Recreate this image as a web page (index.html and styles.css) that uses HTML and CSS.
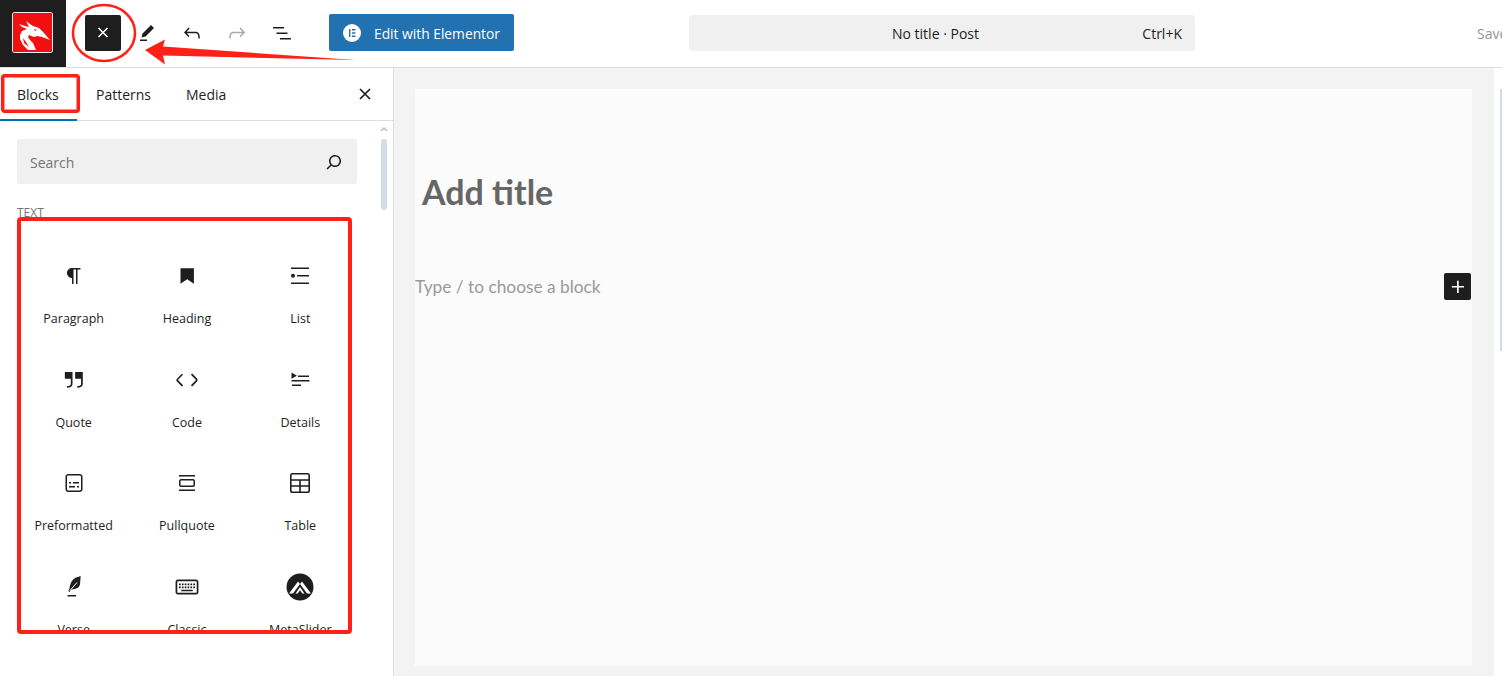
FILE: index.html
```html
<!DOCTYPE html>
<html lang="en">
<head>
<meta charset="utf-8">
<title>Add New Post</title>
<link rel="stylesheet" href="styles.css">
</head>
<body>
<div class="app">
  <header class="topbar">
    <div class="logo-cell">
      <div class="logo">
        <svg viewBox="0 0 39 39" width="39" height="39"><rect width="39" height="39" rx="2" fill="#f01010"/><path fill="#fff" d="M13 8l4 3 3 2 6 2 3 3 2 2 6 7-8-3-5-1-3 1-5-2-1 2 2 3 3 3 3 7h-8l-5-5-3-6v-4l2-4 5-2-5-2-3-3 6 2 4 1z"/><path fill="#f01010" d="M21 16l3 1-2 1zM10 25l3 4 3 5-5-4z"/></svg>
      </div>
    </div>
    <div class="tools">
      <button class="tool tool-active"><svg viewBox="0 0 24 24" width="24" height="24"><path stroke="#fff" stroke-width="1.500" d="M7.500 7l9 9M16.500 7l-9 9"/></svg></button>
      <button class="tool"><svg viewBox="0 0 24 24" width="24" height="24"><path fill="#1e1e1e" d="m19 7-3-3-8.500 8.500-1 4 4-1L19 7Zm-7 11.500H5V20h7v-1.500Z"/></svg></button>
      <button class="tool"><svg viewBox="0 0 24 24" width="24" height="24"><path fill="#1e1e1e" d="M18.300 11.700c-.6-.6-1.400-.9-2.300-.9H6.700l2.900-3.300-1.100-1-4.500 5L8.500 16l1-1-2.700-2.700H16c.5 0 .9.2 1.300.5 1 1 1 3.400 1 4.500v.3h1.500v-.2c0-1.500 0-4.300-1.500-5.700z"/></svg></button>
      <button class="tool"><svg viewBox="0 0 24 24" width="24" height="24"><path fill="#aaa" d="M15.600 6.500l-1.100 1 2.900 3.300H8c-.9 0-1.700.3-2.300.9-1.400 1.500-1.400 4.200-1.400 5.600v.2h1.500v-.3c0-1.100 0-3.500 1-4.500.3-.3.7-.5 1.300-.5h9.200L14.500 15l1.100 1.100 4.600-4.600-4.600-5z"/></svg></button>
      <button class="tool"><svg viewBox="0 0 24 24" width="24" height="24"><path fill="#1e1e1e" d="M3 6h11v1.500H3V6Zm3.500 5.500h11V13h-11v-1.500ZM21 17H10v1.500h11V17Z"/></svg></button>
    </div>
    <a class="elementor">
      <span class="el-badge"><svg viewBox="0 0 18 18" width="18" height="18"><circle cx="9" cy="9" r="9" fill="#fff"/><path fill="#2271b1" d="M6 5h1.400v8H6zM9 5h3.400v1.400H9zM9 8.300h3.400v1.400H9zM9 11.600h3.400V13H9z"/></svg></span>
      <span class="el-label">Edit with Elementor</span>
    </a>
    <div class="command">
      <span class="command-title">No title · Post</span>
      <span class="command-key">Ctrl+K</span>
    </div>
    <div class="save">Save</div>
  </header>

  <div class="workspace">
    <aside class="sidebar">
      <nav class="tabs">
        <span class="tab tab-on">Blocks</span>
        <span class="tab tab-patterns">Patterns</span>
        <span class="tab tab-media">Media</span>
        <span class="tabs-close"><svg viewBox="0 0 24 24" width="24" height="24"><path stroke="#1e1e1e" stroke-width="1.700" d="M7 7l10 10M17 7L7 17"/></svg></span>
      </nav>
      <div class="panel">
        <div class="panel-scroll">
          <div class="search">
            <span class="search-text">Search</span>
            <svg viewBox="0 0 24 24" width="24" height="24"><path fill="#1e1e1e" d="M13 5c-3.300 0-6 2.700-6 6 0 1.400.5 2.700 1.300 3.700l-3.800 3.800 1.100 1.100 3.800-3.800c1 .8 2.300 1.300 3.700 1.300 3.300 0 6-2.700 6-6S16.300 5 13 5zm0 10.500c-2.500 0-4.500-2-4.500-4.500s2-4.500 4.500-4.500 4.500 2 4.500 4.500-2 4.500-4.500 4.500z"/></svg>
          </div>
          <div class="section-label">TEXT</div>
          <div class="blocks">
            <div class="block"><svg viewBox="0 0 24 24" width="24" height="24"><path d="m9.996 14v-.225l.004.000v6.225h1.500v-14.500h2.500v14.500h1.500v-14.500h3v-1.500h-8.504c-2.761 0-5 2.239-5 5 0 2.761 2.239 5 5 5z"/></svg><span>Paragraph</span></div>
            <div class="block"><svg viewBox="0 0 24 24" width="24" height="24"><path d="M5.500 4.200h13.400v15.600l-6.700-4.600-6.700 4.600z"/></svg><span>Heading</span></div>
            <div class="block"><svg viewBox="0 0 24 24" width="24" height="24"><path d="M3 3.500h18V5H3zM9 11h12v1.500H9zM3 18.500h18V20H3z"/><circle cx="5" cy="11.700" r="2"/></svg><span>List</span></div>
            <div class="block"><svg viewBox="1.500 2.500 21 21" width="24" height="24"><path d="M13 6v6h5.200v4c0 .8-.2 1.400-.5 1.700-.6.6-1.600.6-2.500.5h-.3v1.500h.5c1 0 2.300-.1 3.300-1 .6-.6 1-1.600 1-2.700V6H13zm-9 6h5.200v4c0 .8-.2 1.400-.5 1.700-.6.6-1.600.6-2.500.5h-.3v1.500h.5c1 0 2.300-.1 3.300-1 .6-.6 1-1.600 1-2.700V6H4v6z"/></svg><span>Quote</span></div>
            <div class="block"><svg viewBox="1.500 1.500 21 21" width="24" height="24"><path d="M20.800 10.700l-4.300-4.300-1.100 1.100 4.300 4.300c.1.1.1.3 0 .4l-4.300 4.300 1.100 1.100 4.300-4.300c.7-.8.7-1.900 0-2.600zM4.200 11.800l4.300-4.300-1-1-4.300 4.300c-.7.7-.7 1.800 0 2.500l4.300 4.300 1.100-1.100-4.300-4.300c-.2-.1-.2-.3-.1-.4z"/></svg><span>Code</span></div>
            <div class="block"><svg viewBox="0 0 24 24" width="24" height="24"><path d="M4 16.500h9V18H4zM3.500 12h18v1.500h-18zM10 7.500h11V9H10zM3.500 4.500l5.500 3.200-5.500 3z"/></svg><span>Details</span></div>
            <div class="block"><svg viewBox="0 0 24 24" width="24" height="24"><path d="M18 3H6c-1.100 0-2.500 1-2.500 2.500v13C3.500 20 4.900 21 6 21h12c1.100 0 2.500-1 2.500-2.500v-13C20.500 4 19.100 3 18 3zm1 15.500c0 .3-.7 1-1 1H6c-.3 0-1-.7-1-1v-13c0-.3.7-1 1-1h12c.3 0 1 .7 1 1zM7 16.500h6V15H7v1.500zm4-4h6V11h-6v1.500zM9 11H7v1.500h2V11zm6 5.500h2V15h-2v1.500z"/></svg><span>Preformatted</span></div>
            <div class="block"><svg viewBox="0 0 24 24" width="24" height="24"><path d="M18 8H6c-1.100 0-2 .9-2 2v4c0 1.100.9 2 2 2h12c1.100 0 2-.9 2-2v-4c0-1.100-.9-2-2-2zm.5 6c0 .3-.2.5-.5.5H6c-.3 0-.5-.2-.5-.5v-4c0-.3.2-.5.5-.5h12c.3 0 .5.2.5.5v4zM4 4v1.500h16V4H4zm0 16h16v-1.500H4V20z"/></svg><span>Pullquote</span></div>
            <div class="block"><svg class="line-icon" viewBox="0 0 24 24" width="24" height="24"><rect x="2.800" y="2.800" width="18.400" height="18.400" rx="1.800"/><path d="M2.800 9h18.400M2.800 15h18.400M12 9v12.200"/></svg><span>Table</span></div>
            <div class="block"><svg viewBox="0 0 24 24" width="24" height="24"><path d="M19 1l-1 .3c-.1 0-3.800 1-5.500 2.200C10.800 4.700 10 5.800 9.600 6.500c-.6 1-2 4.800-2 6.800l-1 2.500c-.2.4 0 .8.4 1 .1 0 .2.1.3.1.3 0 .6-.2.7-.5l.6-1.600c.3 0 .8-.1 1.300-.2.7-.1 1.500-.3 2.300-.5.9-.2 1.700-.5 2.500-.9.8-.3 1.500-.7 2-1.300s.9-1.300 1.100-2c.2-.7.3-1.700.4-2.500.1-.9.1-1.800.2-2.600 0-.9.1-1.600.2-2.200V1zM5.500 21.500h8.500V20H5.500z"/><path class="vein" d="M8 15.500L15 7.500"/></svg><span>Verse</span></div>
            <div class="block"><svg viewBox="1.500 2 21 21" width="24" height="24"><path d="M20 6H4c-1.100 0-2 .9-2 2v9c0 1.100.9 2 2 2h16c1.100 0 2-.9 2-2V8c0-1.100-.9-2-2-2zm.5 11c0 .3-.2.5-.5.5H4c-.3 0-.5-.2-.5-.5V8c0-.3.2-.5.5-.5h16c.3 0 .5.2.5.5v9zM5 9.500h1.500V11H5zm2.500 0H9V11H7.500zm2.500 0h1.500V11H10zm2.500 0H14V11h-1.500zm2.500 0h1.500V11H15zm2.500 0H19V11h-1.500zM5 12h1.500v1.500H5zm2.500 0H9v1.500H7.500zm2.500 0h1.500v1.500H10zm2.500 0H14v1.500h-1.500zm2.500 0h1.500v1.500H15zm2.500 0H19v1.500h-1.500zM7 14.800h10v1.400H7z"/></svg><span>Classic</span></div>
            <div class="block"><svg viewBox="0 0 28 28" width="28" height="28"><circle cx="14" cy="14" r="13.500"/><path fill="#fff" d="M3 20.500 12 8.500l2 2.500-7 9.500zM25 20.500 16 8.500l-2 2.500 7 9.500zM9.500 20.500l4.500-6.500 4.500 6.500h-2.200L14 17.200l-2.300 3.300z"/></svg><span>MetaSlider</span></div>
          </div>
        </div>
        <div class="scrollbar">
          <svg viewBox="0 0 8 6" width="8" height="6"><path d="M1 5l3-3 3 3" fill="none" stroke="#bbb" stroke-width="1.500"/></svg>
          <div class="thumb"></div>
        </div>
      </div>
    </aside>

    <main class="main">
      <div class="canvas">
        <h1 class="title">Add title</h1>
        <div class="para-row">
          <p class="placeholder">Type / to choose a block</p>
          <button class="add"><svg viewBox="0 0 24 24" width="24" height="24"><path fill="#fff" d="M11 12.500V18h1.700v-5.500H18V11h-5.300V5.800H11V11H5.800v1.500H11Z"/></svg></button>
        </div>
      </div>
      <div class="page-scroll"><div class="page-thumb"></div></div>
    </main>
  </div>
</div>

<svg class="annotations" viewBox="0 0 1502 676" width="1502" height="676">
  <ellipse cx="104" cy="33" rx="31" ry="28" fill="none" stroke="#fe2116" stroke-width="2.500"/>
  <path fill="#fe2116" d="M145 50 165 39.500 163 46.500 355 60 163 55.500 165 64.500z"/>
  <rect x="2.700" y="75.700" width="75.600" height="35.600" rx="2" fill="none" stroke="#fe2116" stroke-width="3.500"/>
  <rect x="19" y="219" width="331" height="413" rx="2" fill="none" stroke="#fe2116" stroke-width="4"/>
</svg>
</body>
</html>
```

FILE: styles.css
```css
* { box-sizing: border-box; }
html, body { margin: 0; padding: 0; height: 100%; overflow: hidden; background: #fff; }
body { font-family: "Open Sans", "Noto Sans", sans-serif; font-size: 13px; color: #1e1e1e; }
button { border: 0; padding: 0; background: none; display: flex; align-items: center; justify-content: center; }

.app { display: flex; flex-direction: column; width: 1502px; height: 676px; }

.topbar { height: 68px; flex: none; display: flex; align-items: center; border-bottom: 1px solid #ddd; background: #fff; }
.logo-cell { width: 66px; height: 67px; background: #1e1e1e; display: flex; align-items: center; padding-left: 13px; padding-bottom: 3px; flex: none; }
.logo { width: 39px; height: 39px; display: block; line-height: 0; box-shadow: 0 0 0 1px #eee; border-radius: 2px; }

.tools { display: flex; align-items: center; margin-left: 19px; flex: none; height: 36px; margin-top: -1px; }
.tool { width: 44.800px; height: 36px; }
.tool-active { width: 36px; background: #1e1e1e; border-radius: 2px; margin-right: 4px; }

.elementor { margin-left: 24.800px; width: 185px; height: 37px; flex: none; background: #2271b1; border-radius: 2px; color: #fff; display: flex; align-items: center; gap: 13px; padding-left: 14px; font-size: 13.800px; margin-top: -2px; }
.el-badge { display: flex; }
.el-label { margin-top: 1px; }

.command { margin-left: 175px; width: 506px; height: 36px; flex: none; background: #f0f0f0; border-radius: 4px; position: relative; display: flex; align-items: center; justify-content: center; margin-top: -1px; font-size: 14px; padding-right: 13px; }
.command-key { position: absolute; right: 13px; }

.save { margin-left: auto; width: 25px; overflow: hidden; white-space: nowrap; color: #949494; margin-top: -1px; font-size: 14px; }

.workspace { flex: 1; display: flex; min-height: 0; }

.sidebar { width: 394px; flex: none; border-right: 1px solid #ddd; background: #fff; display: flex; flex-direction: column; }
.tabs { height: 53px; flex: none; display: flex; align-items: center; border-bottom: 1px solid #ddd; font-size: 14px; }
.tab { height: 52px; display: flex; align-items: center; font-weight: 500; }
.tab-on { width: 77px; height: 53px; padding: 0 0 1px 17px; align-self: flex-start; margin-right: 1px; box-shadow: inset 0 -2px 0 #0073aa; }
.tab-patterns { margin-left: 18px; }
.tab-media { margin-left: 35px; }
.tabs-close { margin-left: auto; margin-right: 16px; display: flex; }

.panel { flex: 1; display: flex; min-height: 0; }
.panel-scroll { width: 382px; padding: 18px 0 0 17px; flex: none; }
.search { width: 340px; height: 45px; background: #f0f0f0; border-radius: 2px; display: flex; align-items: center; justify-content: space-between; padding: 0 11px 0 13px; font-size: 14px; color: #757575; }
.search-text { margin-top: 1px; }
.section-label { margin-top: 20px; height: 17px; font-size: 12px; line-height: 17px; color: #757575; }
.blocks { height: 412px; overflow: hidden; width: 340px; display: grid; grid-template-columns: repeat(3, 113.330px); grid-auto-rows: 103.500px; padding-top: 41px; }
.block { display: flex; flex-direction: column; align-items: center; font-size: 12.500px; height: 103.500px; }
.block svg { fill: #1e1e1e; flex: none; height: 28px; }
.block svg.line-icon { fill: none; stroke: #1e1e1e; stroke-width: 1.600; }
.vein { fill: none; stroke: #fff; stroke-width: 1; }
.block span { margin-top: 20px; line-height: 18px; }

.scrollbar { width: 12px; margin-left: -4px; padding-top: 5px; display: flex; flex-direction: column; align-items: center; gap: 7px; }
.thumb { width: 6px; height: 71px; background: #d3dde7; border-radius: 3px; }

.main { flex: 1; display: flex; background: #f3f3f3; padding: 21px 0 10px 21px; min-width: 0; }
.canvas { width: 1057px; background: #fbfbfb; display: flex; flex-direction: column; }
.title { margin: 81px 0 0 7px; font-family: "Lato", sans-serif; font-size: 34px; line-height: 44px; font-weight: 700; color: #666; }
.para-row { display: flex; align-items: center; justify-content: space-between; margin-top: 59px; padding-right: 1px; }
.placeholder { margin: 0; font-family: "Lato", sans-serif; font-size: 17.300px; line-height: 27px; color: #999; }
.add { width: 27px; height: 27px; background: #1e1e1e; border-radius: 2px; }
.page-scroll { margin: -21px 0 -10px auto; width: 8px; background: #fff; padding-top: 21px; }
.page-thumb { margin-left: 6px; height: 262px; background: #d3dde7; }

.annotations { position: absolute; left: 0; top: 0; pointer-events: none; }
```
